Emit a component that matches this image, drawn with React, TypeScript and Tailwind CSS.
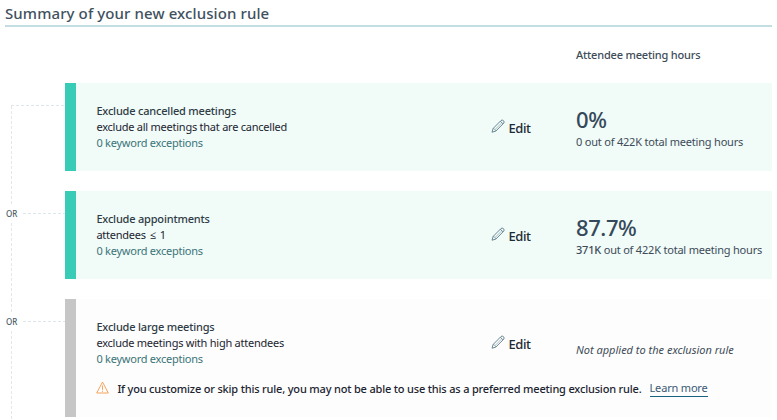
import React from "react";

function Pencil() {
  return (
    <svg width="14" height="14" viewBox="0 0 14 14" fill="none" stroke="#62808c" strokeWidth="0.95" strokeLinejoin="round" className="shrink-0">
      <path d="M1 13.2 L2.2 9.4 L10 1.5 Q11.2 .5 12.5 1.7 Q13.7 3 12.7 4.2 L4.8 12.1 Z" />
      <path d="M9.3 2.2 L12 4.9" />
      <path d="M4 10.6 L10.3 4.2" strokeWidth="0.5" />
      <path d="M2.2 9.4 Q3.6 9.6 3.8 10.6 Q4.8 10.9 4.8 12.1" strokeWidth="0.6" />
    </svg>
  );
}

function Warning() {
  return (
    <svg width="13" height="13" viewBox="0 0 13 13" fill="none" stroke="#f7a35c" className="shrink-0">
      <path d="M6.5 1 L12.3 12 H.7 Z" strokeWidth="1" />
      <path d="M6.5 4.4 V8.8 M6.5 9.7 V10.8" strokeWidth="1" />
    </svg>
  );
}

const V = "w-px bg-[repeating-linear-gradient(180deg,#e4e6e8_0px,#e4e6e8_3px,transparent_3px,transparent_5px)]";
const H = "h-px bg-[repeating-linear-gradient(90deg,#dce7ec_0px,#dce7ec_3px,transparent_3px,transparent_5px)]";

function Rail({ first = false }: { first?: boolean }) {
  if (first) {
    return (
      <div className="flex w-[65px] shrink-0 flex-col pl-[11px] pt-[22px]">
        <div className={`${H} w-full shrink-0`} />
        <div className={`${V} flex-1`} />
      </div>
    );
  }
  return (
    <div className="flex w-[65px] shrink-0 flex-col">
      <div className={`${V} ml-[11px] h-[14px]`} />
      <div className="flex h-[18px] items-center">
        <span className="w-[23px] pl-[6px] text-[8px] leading-[16px] font-medium tracking-normal text-[#4b5f6b]">OR</span>
        <div className={`${H} -mt-px flex-1`} />
      </div>
      <div className={`${V} ml-[11px] flex-1`} />
    </div>
  );
}

type RuleProps = {
  first?: boolean;
  applied?: boolean;
  title: React.ReactNode;
  detail: React.ReactNode;
  stat: React.ReactNode;
  footer?: React.ReactNode;
};

function Rule({ first, applied, title, detail, stat, footer }: RuleProps) {
  return (
    <div className={`flex ${footer ? "h-[121px]" : "h-[108px]"}`}>
      <Rail first={first} />
      <div className={`flex flex-1 flex-col border-l-[11px] pl-[20.4px] pt-5 ${footer ? "h-[118px]" : "h-[88px]"} ${applied ? "border-[#38cbb5] bg-[#f1fbf8]" : "border-[#c6c6c6] bg-[#fdfdfd]"}`}>
        <div className="flex h-12">
          <div className="w-[395px] leading-4">
            <div className="font-medium tracking-[-0.19px] text-[#2f3b45]">{title}</div>
            <div className="tracking-[-0.24px] text-[#1b2430]">{detail}</div>
            <div className="tracking-[-0.24px] text-[#3a7478]">0 keyword exceptions</div>
          </div>
          <div className="flex w-[84.6px] gap-[3px] pt-4">
            <Pencil />
            <span className="pt-px text-[13px] leading-4 font-medium tracking-[-0.4px] text-[#1d2b36]">Edit</span>
          </div>
          <div className="text-[#3d4c58]">{stat}</div>
        </div>
        {footer}
      </div>
    </div>
  );
}

function Stat({ value, children }: { value: string; children: React.ReactNode }) {
  return (
    <>
      <div className="pt-1 text-[22px] leading-6 font-medium tracking-[-0.4px] text-[#34495a]">{value}</div>
      <div className="pt-[3px] leading-4 tracking-[-0.2px]">{children}</div>
    </>
  );
}

export default function App() {
  return (
    <div className="h-[420px] w-[777px] overflow-hidden bg-white pr-[5px] font-['Noto_Sans','Open_Sans',sans-serif] text-[11px] whitespace-nowrap">
      <h1 className="ml-[5px] h-[27px] border-b-2 border-[#c3dde2] pt-[3px] text-[15px] leading-5 font-medium tracking-[0.1px] text-[#3f5160]">
        Summary of your new exclusion rule
      </h1>
      <div className="h-14 pl-[576px] pt-5 leading-4 font-medium tracking-[-0.19px] text-[#3d4c58]">
        Attendee meeting hours
      </div>
      <Rule
        first
        applied
        title="Exclude cancelled meetings"
        detail="exclude all meetings that are cancelled"
        stat={<Stat value="0%">0 out of 422K total meeting hours</Stat>}
      />
      <Rule
        applied
        title="Exclude appointments"
        detail={<span className="[word-spacing:1.3px]">attendees ≤ 1</span>}
        stat={<Stat value="87.7%"><span className="font-medium">371K</span> out of 422K total meeting hours</Stat>}
      />
      <Rule
        title="Exclude large meetings"
        detail="exclude meetings with high attendees"
        stat={<div className="pt-[23px] leading-4 italic">Not applied to the exclusion rule</div>}
        footer={
          <div className="flex pt-[14px] leading-4">
            <Warning />
            <span className="ml-2 font-medium tracking-[-0.177px] text-[#1b2430]">If you customize or skip this rule, you may not be able to use this as a preferred meeting exclusion rule.</span>
            <a className="ml-2 h-4 border-b border-[#17637f] leading-[14px] tracking-[-0.18px] text-[#3a5a76]">Learn more</a>
          </div>
        }
      />
    </div>
  );
}
